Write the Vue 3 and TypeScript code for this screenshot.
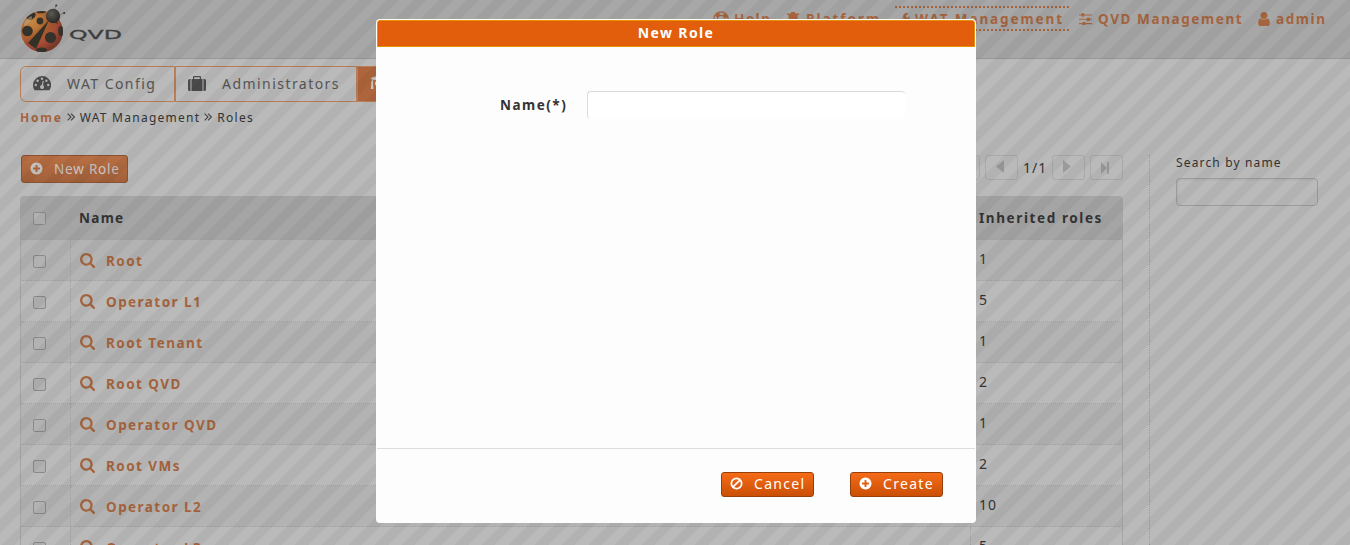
<script setup lang="ts">
interface Role {
  name: string
  inherited: number
}

const roles: Role[] = [
  { name: 'Root', inherited: 1 },
  { name: 'Operator L1', inherited: 5 },
  { name: 'Root Tenant', inherited: 1 },
  { name: 'Root QVD', inherited: 2 },
  { name: 'Operator QVD', inherited: 1 },
  { name: 'Root VMs', inherited: 2 },
  { name: 'Operator L2', inherited: 10 },
  { name: 'Operator L3', inherited: 5 },
]

const icons = {
  search:
    'M1216 832q0-185-131.5-316.5t-316.5-131.5-316.5 131.5-131.5 316.5 131.5 316.5 316.5 131.5 316.5-131.5 131.5-316.5zm512 832q0 52-38 90t-90 38q-54 0-90-38l-343-342q-179 124-399 124-143 0-273.5-55.5t-225-150-150-225-55.5-273.5 55.5-273.5 150-225 225-150 273.5-55.5 273.5 55.5 225 150 150 225 55.5 273.5q0 220-124 399l343 343q37 37 37 90z',
  plus: 'M1344 960v-128q0-26-19-45t-45-19h-256v-256q0-26-19-45t-45-19h-128q-26 0-45 19t-19 45v256h-256q-26 0-45 19t-19 45v128q0 26 19 45t45 19h256v256q0 26 19 45t45 19h128q26 0 45-19t19-45v-256h256q26 0 45-19t19-45zm320-64q0 209-103 385.5t-279.5 279.5-385.5 103-385.5-103-279.5-279.5-103-385.5 103-385.5 279.5-279.5 385.5-103 385.5 103 279.5 279.5 103 385.5z',
  ban: 'M1440 893q0-161-87-295l-754 753q137 89 297 89 111 0 211.5-43.5t173.5-116.5 116-174.5 43-212.5zm-999 299l755-754q-135-91-300-91-148 0-273 73t-198 199-73 274q0 162 89 299zm1223-299q0 157-61 300t-163.5 246-245 164-298.5 61-298.5-61-245-164-163.5-246-61-300 61-299.5 163.5-245.5 245-164 298.5-61 298.5 61 245 164 163.5 245.5 61 299.5z',
  user: 'M1536 1399q0 109-62.5 187t-150.5 78h-854q-88 0-150.5-78t-62.5-187q0-85 8.5-160.5t31.5-152 58.5-131 94-89 134.5-34.5q131 128 313 128t313-128q76 0 134.5 34.5t94 89 58.5 131 31.5 152 8.5 160.5zm-256-887q0 159-112.5 271.5t-271.5 112.5-271.5-112.5-112.5-271.5 112.5-271.5 271.5-112.5 271.5 112.5 112.5 271.5z',
  sliders:
    'M352 1312v128h-352v-128h352zm352-128q26 0 45 19t19 45v256q0 26-19 45t-45 19h-256q-26 0-45-19t-19-45v-256q0-26 19-45t45-19h256zm160-384v128h-864v-128h864zm-640-512v128h-224v-128h224zm1312 1024v128h-736v-128h736zm-960-1152q26 0 45 19t19 45v256q0 26-19 45t-45 19h-256q-26 0-45-19t-19-45v-256q0-26 19-45t45-19h256zm640 512q26 0 45 19t19 45v256q0 26-19 45t-45 19h-256q-26 0-45-19t-19-45v-256q0-26 19-45t45-19h256zm320 128v128h-224v-128h224zm0-512v128h-864v-128h864z',
  wrench:
    'M448 1472q0-26-19-45t-45-19-45 19-19 45 19 45 45 19 45-19 19-45zm644-420l-682 682q-37 37-90 37-52 0-91-37l-106-108q-38-36-38-90 0-53 38-91l681-681q39 98 114.5 173.5t173.5 114.5zm634-435q0 39-23 106-47 134-164.5 217.5t-258.5 83.5q-185 0-316.5-131.5t-131.5-316.5 131.5-316.5 316.5-131.5q58 0 121.5 16.5t107.5 46.5q16 11 16 28t-16 28l-293 169v224l193 107q5-3 79-48.5t135.5-81 70.5-35.5q15 0 23.5 10t8.5 25z',
}
</script>

<template>
  <div class="page">
    <header class="top">
      <div class="brand">
        <svg class="bug" width="48" height="52" viewBox="0 0 48 52">
          <defs>
            <radialGradient id="shell" cx="0.25" cy="0.25" r="0.8">
              <stop offset="0" stop-color="#c58a45" />
              <stop offset="0.45" stop-color="#b0652f" />
              <stop offset="0.75" stop-color="#a34a34" />
              <stop offset="1" stop-color="#7d3a2a" />
            </radialGradient>
            <radialGradient id="head" cx="0.4" cy="0.35" r="0.6">
              <stop offset="0" stop-color="#5d5b56" />
              <stop offset="1" stop-color="#302e2a" />
            </radialGradient>
            <clipPath id="body"><ellipse cx="22" cy="31.500" rx="21" ry="20.500" /></clipPath>
          </defs>
          <ellipse cx="22" cy="31.500" rx="21" ry="20.500" fill="url(#shell)" />
          <g clip-path="url(#body)" fill="#35312b">
            <path d="M29 20L8 43L16 49Z" />
            <path d="M29 20L38 24L32 12Z" />
            <circle cx="7.500" cy="31" r="5.300" />
            <circle cx="20" cy="21" r="3.400" />
            <ellipse cx="11" cy="16" rx="5" ry="3.400" transform="rotate(-35 11 16)" />
            <ellipse cx="21" cy="11.500" rx="5" ry="1.800" />
            <circle cx="30.500" cy="37.500" r="5.500" />
            <ellipse cx="41" cy="31" rx="2.800" ry="5" />
            <ellipse cx="21.500" cy="50" rx="5.500" ry="2.600" />
          </g>
          <ellipse cx="8" cy="21" rx="6" ry="2" fill="#cdb48c" opacity="0.5" transform="rotate(-50 8 21)" />
          <path d="M34 12L36 5M39 15L44 13" stroke="#66625c" stroke-width="0.600" fill="none" />
          <circle cx="36.300" cy="5.500" r="1" fill="#35312b" />
          <circle cx="44.200" cy="13" r="1" fill="#35312b" />
          <circle cx="33" cy="16" r="7.200" fill="url(#head)" />
        </svg>
        <svg class="wordmark" width="54" height="16" viewBox="0 0 54 16">
          <text x="0" y="12" textLength="53" lengthAdjust="spacingAndGlyphs">QVD</text>
        </svg>
      </div>
      <nav class="menu">
        <a class="item help">
          <svg width="16" height="16" viewBox="0 0 16 16" fill="none" stroke="currentColor">
            <circle cx="8" cy="8" r="7.200" stroke-width="1.200" />
            <circle cx="8" cy="8" r="3.600" stroke-width="1.200" />
            <circle cx="8" cy="8" r="5.400" stroke-width="3" stroke-dasharray="4.240 4.240" stroke-dashoffset="-2.100" />
          </svg>
          <span>Help</span>
        </a>
        <a class="item platform">
          <svg width="12" height="14" viewBox="0 0 12 14" fill="currentColor">
            <path d="M4 0h4v1.500h4V3h-1.500v9h-9V3H0V1.500h4z" />
          </svg>
          <span>Platform</span>
        </a>
        <a class="item active">
          <svg width="13" height="14" viewBox="64 0 1664 1792" fill="currentColor"><path :d="icons.wrench" /></svg>
          <span>WAT Management</span>
        </a>
        <a class="item qvd">
          <svg width="13" height="13" viewBox="0 0 1536 1536" fill="currentColor"><path :d="icons.sliders" /></svg>
          <span>QVD Management</span>
        </a>
        <a class="item admin">
          <svg width="12" height="14" viewBox="256 128 1280 1536" fill="currentColor"><path :d="icons.user" /></svg>
          <span>admin</span>
        </a>
      </nav>
    </header>

    <div class="tabs">
      <a class="tab first">
        <svg width="18" height="15" viewBox="0 0 18 15">
          <path d="M9 0a9 9 0 0 0-9 9c0 1.800.5 3.500 1.400 4.900.2.300.4.400.7.400h13.800c.3 0 .5-.1.7-.4A9 9 0 0 0 9 0z" fill="#4b4b4b" />
          <g fill="#b7b7b7">
            <circle cx="2.800" cy="9" r="1.200" />
            <circle cx="4.600" cy="4.700" r="1.200" />
            <circle cx="9" cy="2.800" r="1.200" />
            <circle cx="13.400" cy="4.700" r="1.200" />
            <circle cx="15.200" cy="9" r="1.200" />
            <path d="M9.800 4.800l1 .2-.8 4.200a2 2 0 1 1-1.300-.2z" />
          </g>
        </svg>
        <span>WAT Config</span>
      </a>
      <a class="tab second">
        <svg width="18" height="15" viewBox="0 0 18 15" fill="#4b4b4b">
          <path d="M0 4.500A1.500 1.500 0 0 1 1.500 3H2.500v12h-1A1.500 1.500 0 0 1 0 13.500zM3.500 3H5V1a1 1 0 0 1 1-1h6a1 1 0 0 1 1 1v2h1.500v12h-11zM6.200 3h5.600V1.200H6.200zM15.500 3h1A1.500 1.500 0 0 1 18 4.500v9a1.500 1.500 0 0 1-1.500 1.500h-1z" />
        </svg>
        <span>Administrators</span>
      </a>
      <a class="tab current">
        <svg width="20" height="16" viewBox="0 0 20 16" fill="#c9c4c0">
          <path d="M10 0l10 3.200-10 3.300-6.500-2.100c-.6.600-.7 1.400-.7 2.400.6.400.7 1.300.2 1.800L3.500 14H.8l.6-5.400c-.5-.6-.4-1.400.2-1.800 0-1.100.2-2 .6-2.800L0 3.200zM5 6.400l5 1.600 5-1.600v3.400c-2 2.200-8 2.200-10 0z" />
        </svg>
        <span>Roles</span>
      </a>
    </div>

    <div class="crumbs">
      <b>Home</b>
      <svg width="8" height="8" viewBox="0 0 8 8"><path d="M.6.600L4 4L.6 7.400M4 .6L7.400 4L4 7.400" /></svg>
      <span>WAT Management</span>
      <svg width="8" height="8" viewBox="0 0 8 8"><path d="M.6.600L4 4L.6 7.400M4 .6L7.400 4L4 7.400" /></svg>
      <span>Roles</span>
    </div>

    <div class="content">
      <main class="list">
        <div class="toolbar">
          <button class="btn new">
            <svg width="13" height="13" viewBox="64 64 1664 1664" fill="currentColor"><path :d="icons.plus" /></svg>
            <span>New Role</span>
          </button>
          <div class="pager">
            <span class="page-btn"></span>
            <span class="page-btn prev">
              <svg width="8" height="13" viewBox="0 0 8 13"><path d="M8 0v13L0 6.500z" /></svg>
            </span>
            <span class="count">1/1</span>
            <span class="page-btn next">
              <svg width="8" height="13" viewBox="0 0 8 13"><path d="M0 0v13L8 6.500z" /></svg>
            </span>
            <span class="page-btn last">
              <svg width="8" height="12" viewBox="0 0 8 12"><path d="M0 0v12L6 6zM6 0h2v12H6z" /></svg>
            </span>
          </div>
        </div>
        <div class="table">
          <div class="row head">
            <div class="cell check"><i class="box"></i></div>
            <div class="cell name">Name</div>
            <div class="cell inherited">Inherited roles</div>
          </div>
          <div v-for="role in roles" :key="role.name" class="row">
            <div class="cell check"><i class="box"></i></div>
            <div class="cell name link">
              <svg width="15" height="15" viewBox="64 128 1664 1664" fill="currentColor"><path :d="icons.search" /></svg>
              <span>{{ role.name }}</span>
            </div>
            <div class="cell inherited">{{ role.inherited }}</div>
          </div>
        </div>
      </main>
      <aside class="side">
        <div class="side-label">Search by name</div>
        <div class="side-input"></div>
      </aside>
    </div>

    <div class="overlay"></div>

    <section class="dialog">
      <h1 class="dialog-title">New Role</h1>
      <div class="dialog-body">
        <label class="field-label">Name(*)</label>
        <div class="field"></div>
      </div>
      <div class="dialog-actions">
        <button class="btn">
          <svg width="13" height="13" viewBox="64 64 1664 1664" fill="currentColor"><path :d="icons.ban" /></svg>
          <span>Cancel</span>
        </button>
        <button class="btn">
          <svg width="13" height="13" viewBox="64 64 1664 1664" fill="currentColor"><path :d="icons.plus" /></svg>
          <span>Create</span>
        </button>
      </div>
    </section>
  </div>
</template>

<style>
body {
  margin: 0;
  overflow: hidden;
}
</style>

<style scoped>
.page {
  position: relative;
  width: 1350px;
  height: 545px;
  overflow: hidden;
  background: #bababa;
  color: #333;
  font-family: 'Noto Sans', 'Open Sans', sans-serif;
  font-size: 14px;
  letter-spacing: 1px;
}
.page * {
  box-sizing: border-box;
}
svg {
  display: block;
  flex: none;
}
span {
  white-space: nowrap;
}
.top {
  display: flex;
  height: 59px;
  background: #a7a7a7;
  border-bottom: 1px solid #979797;
}
.brand {
  display: flex;
  width: 712px;
  padding-left: 20px;
}
.wordmark {
  margin: 27px 0 0 1px;
}
.wordmark text {
  font: 13px 'DejaVu Sans', sans-serif;
  letter-spacing: 0;
  fill: #404040;
  stroke: #404040;
  stroke-width: 0.3;
}
.menu {
  display: flex;
  padding-top: 6px;
  color: #a5643d;
  font-size: 13.5px;
  font-weight: bold;
  line-height: 21px;
  letter-spacing: 1.6px;
}
.item {
  display: flex;
  align-items: center;
  gap: 6px;
  height: 25px;
}
.item span {
  padding-top: 1px;
}
.help {
  width: 74px;
  padding-left: 1px;
  gap: 5px;
}
.platform {
  width: 109px;
  padding-left: 1px;
  gap: 7px;
  letter-spacing: 2px;
}
.active {
  width: 174px;
  margin-right: 10px;
  padding-left: 2px;
  gap: 5px;
  border-top: 2px dotted #a5643d;
  border-bottom: 2px dotted #a5643d;
  letter-spacing: 1.9px;
}
.qvd {
  width: 179px;
}
.tabs {
  display: flex;
  height: 36px;
  margin: 7px 0 0 20px;
}
.tab {
  display: flex;
  align-items: center;
  padding-bottom: 2px;
  border: 1px solid #b97d58;
  font-size: 14px;
  letter-spacing: 1.45px;
  color: #555;
}
.first {
  width: 155px;
  padding-left: 12px;
  gap: 16px;
  border-radius: 6px 0 0 6px;
}
.second {
  width: 182px;
  padding-left: 12px;
  gap: 16px;
}
.current {
  width: 130px;
  padding-left: 12px;
  gap: 14px;
  background: #ae653b;
  color: #ddd;
}
.crumbs {
  display: flex;
  align-items: center;
  height: 18px;
  margin: 6px 0 0 20px;
  font-size: 12px;
  letter-spacing: 1.26px;
}
.crumbs b {
  color: #a5643d;
  letter-spacing: 1.8px;
}
.crumbs svg {
  margin: 0 5px 0 4px;
  fill: none;
  stroke: #444;
  stroke-width: 1.1;
}
.content {
  display: flex;
  margin: 29px 0 0 20px;
}
.list {
  width: 1103px;
}
.toolbar {
  display: flex;
  justify-content: space-between;
  height: 41px;
  padding-left: 1px;
}
.btn {
  display: flex;
  align-items: center;
  gap: 11px;
  width: 93px;
  height: 25px;
  padding: 0 0 2px 8px;
  border: 1px solid #953f0b;
  border-radius: 3px;
  background: linear-gradient(#f56b18, #cb4f05);
  color: #fff;
  font: 14px 'Noto Sans', sans-serif;
  letter-spacing: 1.3px;
}
.new {
  width: 107px;
  height: 28px;
  padding-bottom: 1px;
  border-color: #8a5232;
  background: linear-gradient(#b96f43, #a2603a);
  color: #c9c4c1;
  font-size: 13.5px;
  letter-spacing: 0.8px;
}
.pager {
  display: flex;
}
.page-btn {
  display: flex;
  align-items: center;
  width: 33px;
  height: 25px;
  margin-right: 5px;
  padding-bottom: 2px;
  border: 1px solid #a9a9a9;
  border-radius: 3px;
  fill: #9b9b9b;
}
.page-btn svg {
  margin-left: 10px;
}
.page-btn.last {
  margin-right: 0;
  padding-bottom: 0;
}
.count {
  width: 24px;
  margin-right: 5px;
  line-height: 26px;
}
.table {
  border: 1px solid #a5a5a5;
  border-bottom: 0;
  border-radius: 4px 4px 0 0;
}
.row {
  display: flex;
  height: 41px;
  border-bottom: 1px dotted #a2a2a2;
  background: #bababa;
}
.row:nth-child(even) {
  background: #b3b3b3;
}
.row.head {
  height: 43px;
  background: #a5a5a5;
  font-size: 13.5px;
  font-weight: bold;
}
.cell {
  display: flex;
  align-items: center;
}
.check {
  width: 50px;
  padding: 2px 0 0 12px;
  border-right: 1px dotted #a2a2a2;
}
.head .check {
  padding-top: 0;
}
.box {
  width: 13px;
  height: 13px;
  border: 1px solid #8a8a8a;
  border-radius: 2px;
  background: #b2b2b2;
}
.name {
  width: 900px;
  padding-left: 8px;
  border-right: 1px dotted #a2a2a2;
}
.head .name {
  letter-spacing: 1.3px;
}
.link {
  gap: 11px;
  padding: 1px 0 0 9px;
  color: #a5643d;
  font-size: 13.5px;
  font-weight: bold;
  letter-spacing: 1.45px;
}
.inherited {
  padding: 0 0 3px 8px;
}
.head .inherited {
  padding-bottom: 0;
  letter-spacing: 1.6px;
}
.side {
  width: 200px;
  height: 420px;
  margin-left: 26px;
  padding-left: 26px;
  border-left: 1px dotted #999;
  font-size: 12px;
  letter-spacing: 1.15px;
}
.side-label {
  height: 23px;
  line-height: 16px;
}
.side-input {
  width: 142px;
  height: 28px;
  border: 1px solid #9c9c9c;
  border-radius: 4px;
  box-shadow: inset 1px 1px 2px #b0b0b0;
}
.overlay {
  position: absolute;
  inset: 0;
  background: repeating-linear-gradient(
    135deg,
    transparent 0 9.428px,
    rgba(0, 0, 0, 0.045) 9.428px 18.856px
  );
}
.dialog {
  position: absolute;
  left: 376px;
  top: 19px;
  display: flex;
  flex-direction: column;
  width: 600px;
  height: 504px;
  padding: 1px;
  border-radius: 4px;
  background: #fdfdfd;
}
.dialog-title {
  height: 27px;
  margin: 0;
  border: 1px solid #e78f08;
  border-radius: 3px 3px 0 0;
  background: #e25d0c;
  color: #fff;
  font-size: 14px;
  line-height: 23px;
  letter-spacing: 1.4px;
  text-align: center;
}
.dialog-body {
  display: flex;
  flex: 1;
  padding: 44px 0 0 123px;
}
.field-label {
  width: 87px;
  font-size: 13.5px;
  font-weight: bold;
  line-height: 28px;
  letter-spacing: 1.5px;
}
.field {
  width: 318px;
  height: 28px;
  border-top: 1px solid #dadada;
  border-left: 1px solid #dadada;
  border-radius: 4px;
  background: #fff;
}
.dialog-actions {
  display: flex;
  justify-content: flex-end;
  gap: 36px;
  height: 74px;
  padding: 23px 32px 0 0;
  border-top: 1px solid #ddd;
}
</style>
